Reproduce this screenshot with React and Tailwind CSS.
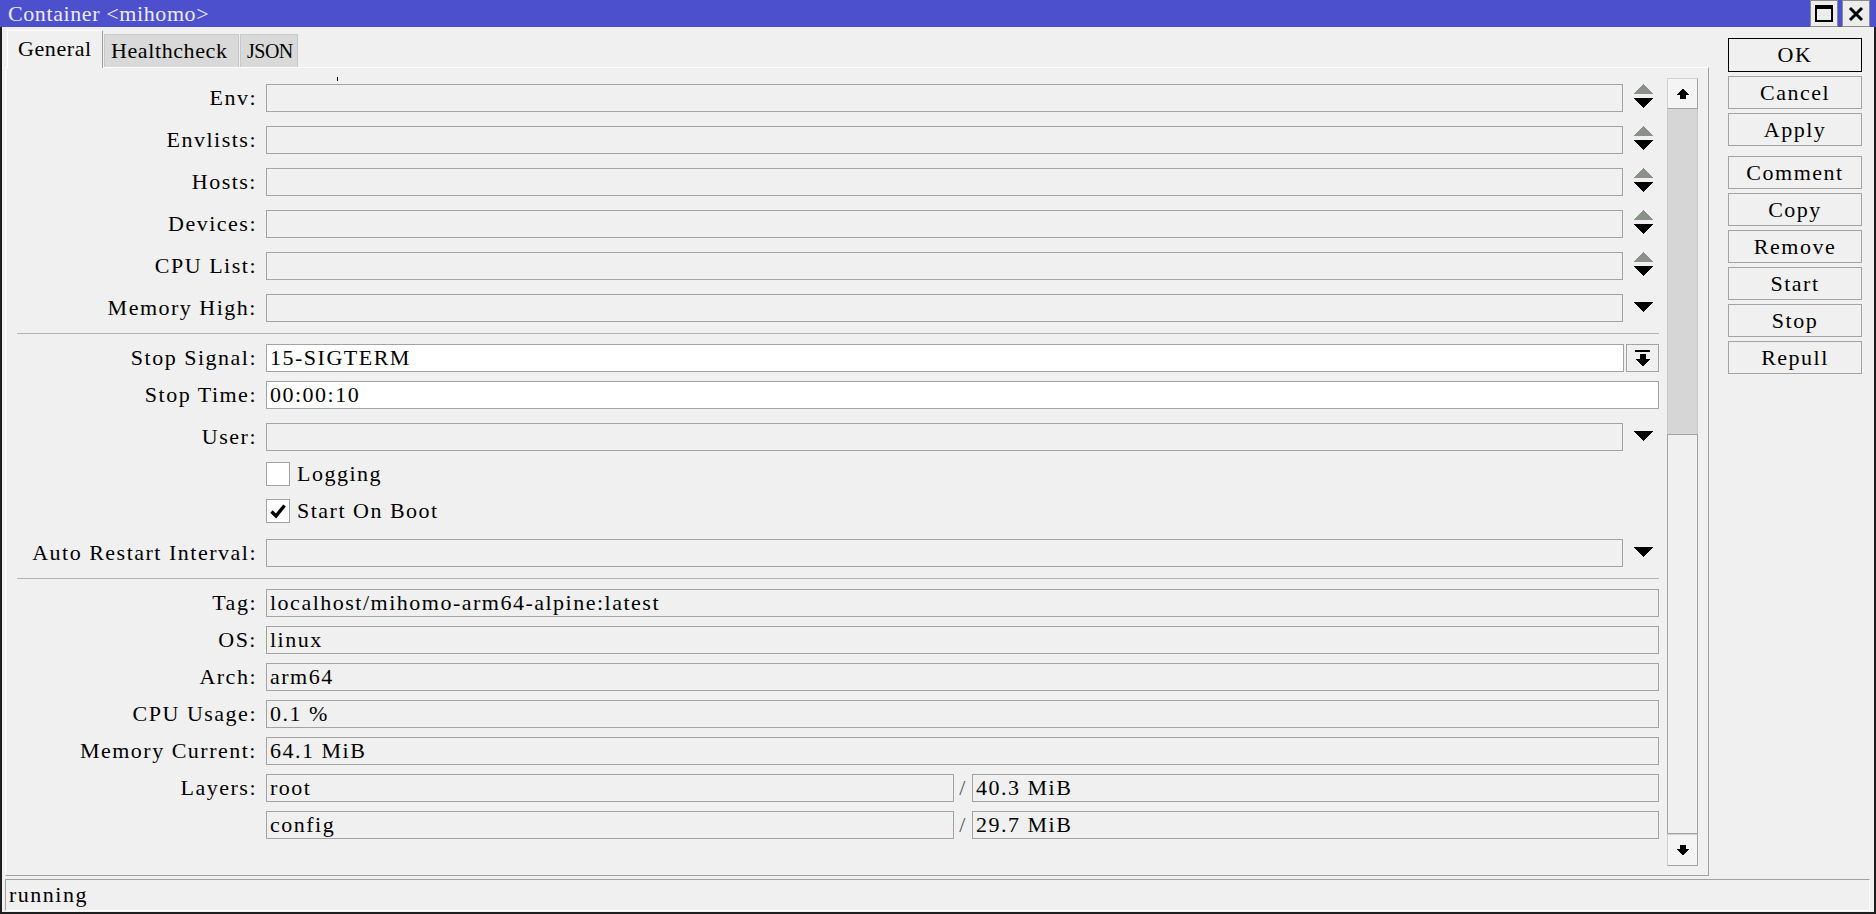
import React from "react";

const UpDown = () => (
  <svg width="20" height="24" viewBox="0 0 20 24" shapeRendering="crispEdges" className="mb-[5px]">
    <polygon points="10,0 20,10 0,10" fill="#8b9088" />
    <polygon points="0,14 20,14 10,24" fill="#000" />
  </svg>
);

const Down = () => (
  <svg width="20" height="10" viewBox="0 0 20 10" shapeRendering="crispEdges" className="mb-[3px]">
    <polygon points="0,0 20,0 10,10" fill="#000" />
  </svg>
);

const Label = ({ children }) => (
  <div className="w-[251px] shrink-0 text-right text-black whitespace-nowrap">{children}</div>
);

const Field = ({ value, white, className }) => (
  <div
    className={
      (white ? "bg-white " : "bg-[#f0f0f0] ") +
      "h-[28px] border border-[#a3a3a3] pl-[3px] flex items-center whitespace-nowrap text-black " +
      (className || "")
    }
  >
    {value}
  </div>
);

const ArrowRow = ({ label, kind, className }) => (
  <div className={"flex items-center h-[28px] " + (className || "")}>
    <Label>{label}</Label>
    <div className="w-[9px] shrink-0" />
    <Field className="w-[1357px]" />
    <div className="w-[36px] h-[28px] pl-[10px] flex items-center">
      {kind === "ud" ? <UpDown /> : <Down />}
    </div>
  </div>
);

const FullRow = ({ label, value, white, className }) => (
  <div className={"flex items-center h-[28px] " + (className || "")}>
    <Label>{label}</Label>
    <div className="w-[9px] shrink-0" />
    <Field value={value} white={white} className="w-[1393px]" />
  </div>
);

const LayerRow = ({ label, name, size, className }) => (
  <div className={"flex items-center h-[28px] " + (className || "")}>
    <Label>{label}</Label>
    <div className="w-[9px] shrink-0" />
    <Field value={name} className="w-[688px]" />
    <div className="w-[18px] text-center text-[#555]">/</div>
    <Field value={size} className="w-[687px]" />
  </div>
);

const CheckRow = ({ label, checked, className }) => (
  <div className={"flex items-center h-[28px] " + (className || "")}>
    <div className="w-[260px] shrink-0" />
    <div className="w-[24px] h-[24px] border border-[#a3a3a3] bg-white flex items-center justify-center">
      {checked && (
        <svg width="16" height="16" viewBox="0 0 16 16">
          <path d="M1.5 8.5 L6 13 L14.5 2.5" stroke="#000" strokeWidth="3.4" fill="none" strokeLinejoin="miter" />
        </svg>
      )}
    </div>
    <div className="ml-[7px] text-black">{label}</div>
  </div>
);

const Sep = ({ className }) => <div className={"h-px bg-[#b4b4b4] ml-[11px] w-[1642px] " + (className || "")} />;

const Btn = ({ children, def, className }) => (
  <div
    className={
      (def ? "border-black " : "border-[#a3a3a3] ") +
      "w-[134px] h-[33px] border bg-[#f0f0f0] flex items-center justify-center text-black " +
      (className || "")
    }
  >
    {children}
  </div>
);

export default function App() {
  return (
    <div className="w-[1876px] h-[914px] flex flex-col bg-[#f0f0f0] font-['Liberation_Serif',serif] text-[22px] tracking-[1.5px] leading-none overflow-hidden">
      {/* Title bar */}
      <div className="h-[27px] shrink-0 bg-[#4c50cc] flex items-center pl-[8px]">
        <div className="text-[#ecebff] tracking-[0.6px]">Container &lt;mihomo&gt;</div>
        <div className="ml-auto flex h-[27px] gap-[4px] mr-[6px]">
          <div className="w-[28px] h-[27px] bg-[#ececec] border border-[#8a8a8a] flex items-center justify-center">
            <svg width="18" height="17" viewBox="0 0 18 17" shapeRendering="crispEdges">
              <rect x="1" y="1" width="16" height="15" fill="none" stroke="#000" strokeWidth="2" />
              <rect x="1" y="1" width="16" height="3" fill="#000" />
            </svg>
          </div>
          <div className="w-[28px] h-[27px] bg-[#ececec] border border-[#8a8a8a] flex items-center justify-center">
            <svg width="16" height="16" viewBox="0 0 16 16">
              <path d="M2 2 L14 14 M14 2 L2 14" stroke="#000" strokeWidth="3" />
            </svg>
          </div>
        </div>
      </div>

      {/* Body */}
      <div className="flex-1 flex flex-col border-x-2 border-b-2 border-[#1e1e1e] min-h-0">
        <div className="flex h-[849px]">
          {/* Left: tabs + panel */}
          <div className="w-[1707px] pl-[3px] pt-[3px] flex flex-col">
            <div className="flex items-end h-[37px] ml-[2px] gap-[1px] tracking-[0.6px]">
              <div className="relative z-10 -mb-px w-[96px] h-[38px] bg-[#f0f0f0] border-t border-l border-white border-r border-r-[#a0a0a0] flex items-center pl-[10px] pb-[2px] text-black">
                General
              </div>
              <div className="w-[135px] h-[33px] bg-[#d9d9d9] border border-[#c8c8c8] border-b-0 flex items-center pl-[6px] text-black">
                Healthcheck
              </div>
              <div className="w-[58px] h-[33px] bg-[#d9d9d9] border border-[#c8c8c8] border-b-0 flex items-center pl-[6px] text-black text-[20px] tracking-[-0.5px]">
                JSON
              </div>
            </div>
            <div className="relative w-[1704px] h-[809px] border border-t-white border-l-white border-r-[#a0a0a0] border-b-[#a0a0a0] flex">
              <div className="absolute left-[331px] top-[9px] w-px h-[4px] bg-black" />
              {/* Form */}
              <div className="w-[1653px] pt-[16px] flex flex-col">
                <ArrowRow label="Env:" kind="ud" />
                <ArrowRow label="Envlists:" kind="ud" className="mt-[14px]" />
                <ArrowRow label="Hosts:" kind="ud" className="mt-[14px]" />
                <ArrowRow label="Devices:" kind="ud" className="mt-[14px]" />
                <ArrowRow label="CPU List:" kind="ud" className="mt-[14px]" />
                <ArrowRow label="Memory High:" kind="d" className="mt-[14px]" />
                <Sep className="mt-[11px]" />
                <div className="flex items-center h-[28px] mt-[10px]">
                  <Label>Stop Signal:</Label>
                  <div className="w-[9px] shrink-0" />
                  <Field value="15-SIGTERM" white className="w-[1358px]" />
                  <div className="ml-[2px] w-[33px] h-[28px] border border-[#a3a3a3] bg-[#f0f0f0] flex items-center justify-center">
                    <svg width="15" height="17" viewBox="0 0 15 17" shapeRendering="crispEdges">
                      <rect x="0" y="0" width="15" height="2" fill="#000" />
                      <rect x="4.5" y="4" width="6" height="5" fill="#000" />
                      <polygon points="0,9 15,9 7.5,16.5" fill="#000" />
                    </svg>
                  </div>
                </div>
                <FullRow label="Stop Time:" value="00:00:10" white className="mt-[9px]" />
                <ArrowRow label="User:" kind="d" className="mt-[14px]" />
                <CheckRow label="Logging" className="mt-[9px]" />
                <CheckRow label="Start On Boot" checked className="mt-[9px]" />
                <ArrowRow label="Auto Restart Interval:" kind="d" className="mt-[14px]" />
                <Sep className="mt-[11px]" />
                <FullRow label="Tag:" value="localhost/mihomo-arm64-alpine:latest" className="mt-[10px]" />
                <FullRow label="OS:" value="linux" className="mt-[9px]" />
                <FullRow label="Arch:" value="arm64" className="mt-[9px]" />
                <FullRow label="CPU Usage:" value="0.1 %" className="mt-[9px]" />
                <FullRow label="Memory Current:" value="64.1 MiB" className="mt-[9px]" />
                <LayerRow label="Layers:" name="root" size="40.3 MiB" className="mt-[9px]" />
                <LayerRow label="" name="config" size="29.7 MiB" className="mt-[9px]" />
              </div>
              {/* Scrollbar */}
              <div className="ml-[8px] w-[31px] mt-[10px] h-[788px] flex flex-col">
                <div className="h-[31px] border border-[#a3a3a3] border-t-[#d0d0d0] border-l-[#d0d0d0] bg-[#f4f4f4] flex items-center justify-center">
                  <svg width="14" height="10" viewBox="0 0 14 10" shapeRendering="crispEdges">
                    <polygon points="7,0 14,6 0,6" fill="#000" />
                    <rect x="4" y="6" width="6" height="4" fill="#000" />
                  </svg>
                </div>
                <div className="h-[325px] bg-[#d6d6d6] border-x border-[#c8c8c8]" />
                <div className="h-[400px] bg-[#f0f0f0] border border-[#a3a3a3]" />
                <div className="h-[32px] border border-[#a3a3a3] border-t-[#d0d0d0] border-l-[#d0d0d0] bg-[#f4f4f4] flex items-center justify-center">
                  <svg width="14" height="10" viewBox="0 0 14 10" shapeRendering="crispEdges">
                    <rect x="4" y="0" width="6" height="4" fill="#000" />
                    <polygon points="0,4 14,4 7,10" fill="#000" />
                  </svg>
                </div>
              </div>
            </div>
          </div>
          {/* Right buttons */}
          <div className="ml-[19px] pt-[11px] flex flex-col">
            <Btn def className="h-[34px]">OK</Btn>
            <Btn className="mt-[4px]">Cancel</Btn>
            <Btn className="mt-[4px]">Apply</Btn>
            <Btn className="mt-[10px]">Comment</Btn>
            <Btn className="mt-[4px]">Copy</Btn>
            <Btn className="mt-[4px]">Remove</Btn>
            <Btn className="mt-[4px]">Start</Btn>
            <Btn className="mt-[4px]">Stop</Btn>
            <Btn className="mt-[4px]">Repull</Btn>
          </div>
        </div>
        {/* Status bar */}
        <div className="mt-[3px] ml-[3px] mr-[4px] h-[32px] border border-t-[#a0a0a0] border-l-[#a0a0a0] border-r-white border-b-white flex items-center pl-[3px] text-black">
          running
        </div>
      </div>
    </div>
  );
}
